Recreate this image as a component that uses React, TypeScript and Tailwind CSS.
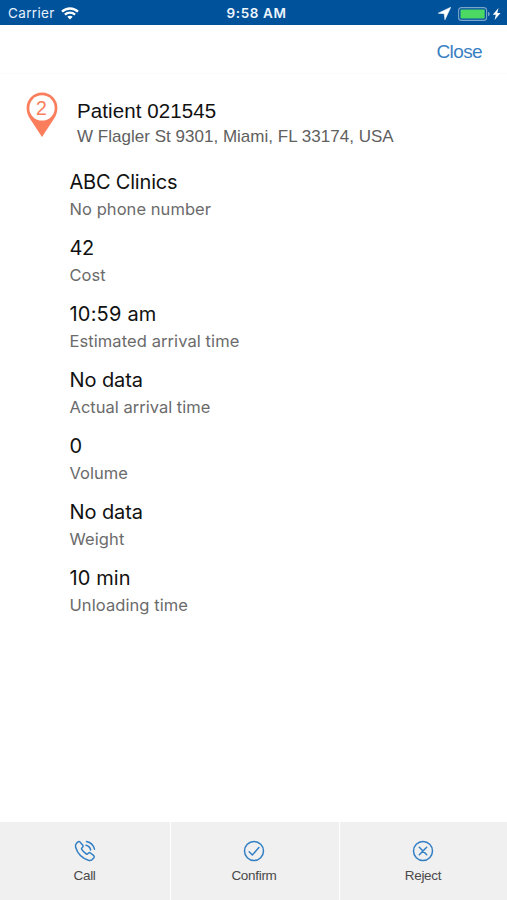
const details = [
  { value: 'ABC Clinics', label: 'No phone number', v: 'tracking-[-0.2px]', l: 'tracking-[0.06px]' },
  { value: '42', label: 'Cost', v: 'tracking-[-0.4px]', l: 'tracking-[0.05px]' },
  { value: '10:59 am', label: 'Estimated arrival time', v: 'tracking-[0.2px]', l: 'tracking-[0.08px]' },
  { value: 'No data', label: 'Actual arrival time', v: 'tracking-[-0.08px]', l: 'tracking-[0.01px]' },
  { value: '0', label: 'Volume', v: 'tracking-[-0.1px]', l: 'tracking-[0px]' },
  { value: 'No data', label: 'Weight', v: 'tracking-[-0.08px]', l: 'tracking-[0.1px]' },
  { value: '10 min', label: 'Unloading time', v: 'tracking-[0.1px]', l: 'tracking-[0.08px]' },
];

function WifiIcon() {
  return (
    <svg width="18" height="13" viewBox="0 0 18 13" fill="none" stroke="white" strokeWidth="2.3">
      <path d="M1 4.7C5.5.4 12.500.4 17 4.700" />
      <path d="M3.900 7.700C6.800 5 11.200 5 14.100 7.700" />
      <path d="M9 12.500L6.300 9.800C7.900 8.500 10.100 8.500 11.700 9.800Z" fill="white" stroke="none" />
    </svg>
  );
}

function Pin() {
  return (
    <svg width="32" height="46" viewBox="0 0 32 46">
      <path d="M16 .5A15.400 15.400 0 0 0 .6 15.900C.6 19.500 1.800 23.300 4 26.800L16 45L28 26.800C30.200 23.300 31.400 19.500 31.400 15.900A15.400 15.400 0 0 0 16 .5Z" fill="#fa7e5c" />
      <circle cx="16" cy="15.900" r="12.700" fill="white" />
      <text x="15.500" y="22.700" textAnchor="middle" fontSize="19.500" fill="#fa7e5c" fontFamily="Liberation Sans, sans-serif">2</text>
    </svg>
  );
}

function CallIcon() {
  return (
    <svg width="22" height="22" viewBox="0 0 22 22" fill="none" stroke="#327fc4" strokeWidth="1.500" strokeLinecap="round" strokeLinejoin="round">
      <path d="M2.300 3.500L4 1.900Q5.100 1.100 6 2.100L8.800 5.300Q9.600 6.400 8.600 7.300L7.800 8Q7.200 8.600 7.700 9.400Q9.500 12.300 12.400 14Q13.100 14.400 13.700 13.800L14.600 13Q15.500 12.200 16.500 13L19.800 15.700Q20.800 16.700 19.900 17.800L18.300 19.500Q16.700 20.900 14.500 20.300C8.500 18.500 3.500 13.300 1.700 7.600Q1 5.100 2.300 3.500Z" />
      <path d="M12 5.300Q15.800 6.200 16.700 10M12.500 1.400Q19 2.800 20.500 9.200" />
    </svg>
  );
}

function CheckIcon() {
  return (
    <svg width="22" height="22" viewBox="0 0 22 22" fill="none" stroke="#327fc4" strokeWidth="1.500" strokeLinecap="round">
      <circle cx="11" cy="11" r="9.500" />
      <path d="M6.200 11.800L9.300 15L15.900 7.500" />
    </svg>
  );
}

function CrossIcon() {
  return (
    <svg width="22" height="22" viewBox="0 0 22 22" fill="none" stroke="#327fc4" strokeWidth="1.500" strokeLinecap="round">
      <circle cx="11" cy="11" r="9.500" />
      <path d="M7.300 7.300L14.700 14.700M14.700 7.300L7.300 14.700" />
    </svg>
  );
}

export default function App() {
  return (
    <div className="flex h-[900px] w-[507px] flex-col overflow-hidden bg-white font-['Inter',sans-serif]">
      <div className="grid h-[25px] shrink-0 grid-cols-3 items-center bg-[#00529b] pt-[2px] text-white">
        <div className="flex items-center gap-[6px] pl-2">
          <span className="text-[13.5px] tracking-[0.35px] text-[#e5f1fb]">Carrier</span>
          <WifiIcon />
        </div>
        <div className="pl-[6px] text-center text-[13.5px] font-semibold tracking-[0.6px] text-[#eef6fd]">9:58 AM</div>
        <div className="flex items-center justify-end pr-[6px]">
          <svg width="13" height="13" viewBox="0 0 12 12" className="mr-[7px]"><path d="M11.800.2L.2 5.700L5.700 6.200L6.400 11.800Z" fill="white" stroke="white" strokeWidth=".5" strokeLinejoin="round" /></svg>
          <svg width="32" height="14" viewBox="0 0 32 14">
            <rect x=".6" y=".6" width="28" height="12.800" rx="3" fill="none" stroke="#7ba5ca" strokeWidth="1.100" />
            <rect x="2.500" y="2.500" width="24.200" height="9" rx="1" fill="#4bd964" />
            <path d="M30 4.700Q31.700 5.200 31.700 7T30 9.300Z" fill="#7ba5ca" />
          </svg>
          <svg width="9" height="12" viewBox="0 0 9 12" className="ml-[2px]"><path d="M6.500 0L.7 6.800H3.800L2.600 12L8.500 5H5.300Z" fill="white" /></svg>
        </div>
      </div>
      <header className="flex h-[49px] shrink-0 items-center justify-end border-b border-[#fafafa] pr-[25px] pt-[6px] font-['Liberation_Sans',sans-serif] text-[19px] text-[#397fc2]">
        <button className="tracking-[-0.6px]">Close</button>
      </header>
      <main className="flex-1">
        <section className="flex pl-[26px] pt-[18px] font-['Liberation_Sans',sans-serif]">
          <Pin />
          <div className="ml-[19px] whitespace-nowrap pt-[5px]">
            <h1 className="text-[20.5px] leading-[28px] tracking-[0.1px] text-[#111]">Patient 021545</h1>
            <p className="pt-[1px] text-[17px] leading-[22px] tracking-[0.02px] text-[#606060]">W Flagler St 9301, Miami, FL 33174, USA</p>
          </div>
        </section>
        <dl className="flex flex-col gap-[12px] pl-[69.5px] pt-[20px]">
          {details.map((d) => (
            <div key={d.label} className="flex flex-col">
              <dt className={`text-[20px] leading-[28px] text-[#111] ${d.v}`}>{d.value}</dt>
              <dd className={`text-[16.5px] leading-[26px] text-[#6b6b6b] ${d.l}`}>{d.label}</dd>
            </div>
          ))}
        </dl>
      </main>
      <nav className="grid h-[78px] shrink-0 grid-cols-[170px_168px_1fr] gap-px bg-white font-['Liberation_Sans',sans-serif] text-[13.5px] tracking-[-0.3px] text-[#4a4a4a]">
        <button className="flex flex-col items-center bg-[#f0f0f0] pr-px pt-[18px]"><CallIcon /><span className="mt-[5px] leading-[18px]">Call</span></button>
        <button className="flex flex-col items-center bg-[#f0f0f0] pr-[2px] pt-[18px]"><CheckIcon /><span className="mt-[5px] leading-[18px]">Confirm</span></button>
        <button className="flex flex-col items-center bg-[#f0f0f0] pr-px pt-[18px]"><CrossIcon /><span className="mt-[5px] leading-[18px]">Reject</span></button>
      </nav>
    </div>
  );
}
